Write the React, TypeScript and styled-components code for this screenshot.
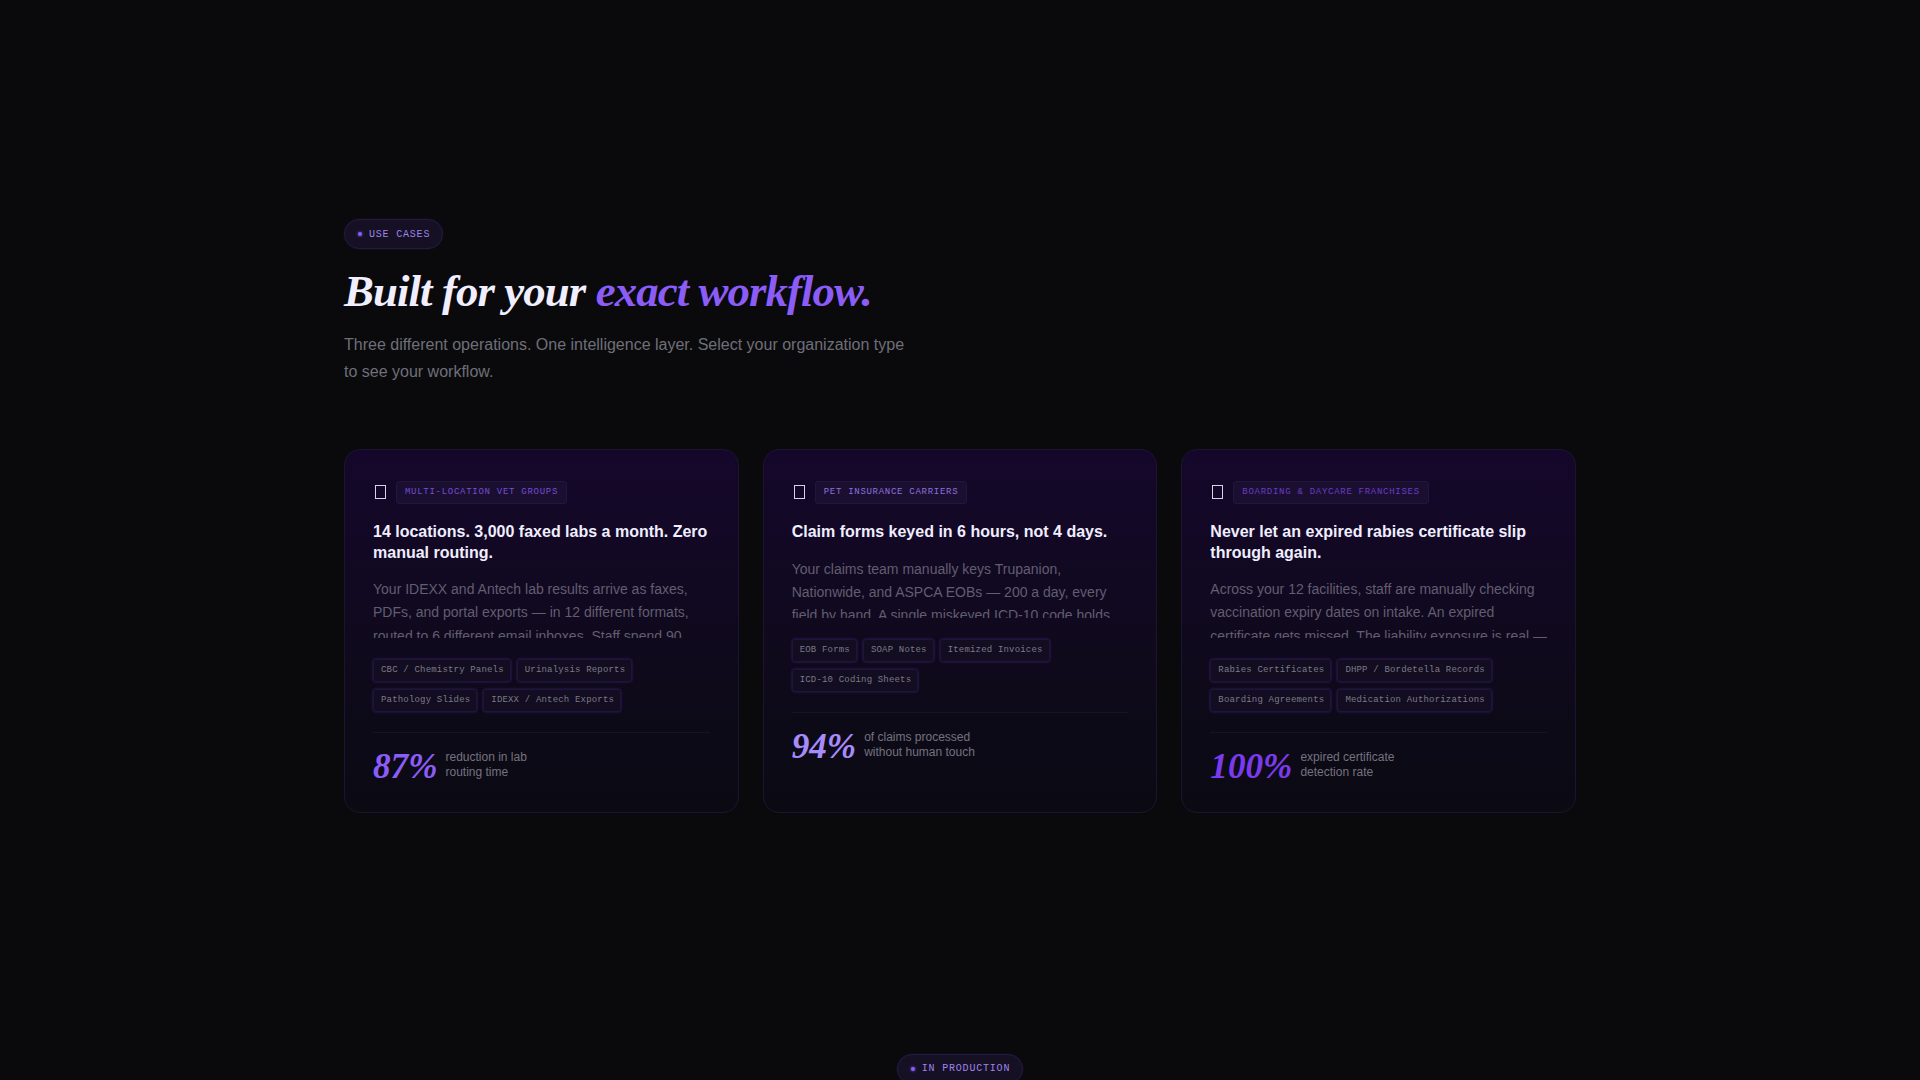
import React from "react";
import styled, { createGlobalStyle } from "styled-components";

const GlobalStyle = createGlobalStyle`
  * { margin:0; padding:0; box-sizing:border-box; }
  html, body, #root {
    width:100%;
    height:100%;
    background:#0a0a0d;
    font-family:"Liberation Sans", Arial, sans-serif;
    overflow:hidden;
  }
`;

const Page = styled.div`
  height: 1080px;
  overflow: hidden;
  display: flex;
  flex-direction: column;
  align-items: center;
`;

const UseCases = styled.section`
  width: 1232px;
  padding: 219px 0 120px;
`;

const Badge = styled.div`
  display: inline-flex;
  align-items: center;
  gap: 7px;
  height: 30px;
  padding: 0 12px;
  border: 1px solid #251b3f;
  border-radius: 100px;
  background: #151024;
  box-shadow: 0 0 0 1px rgba(124, 58, 237, 0.05);
  color: #a084ea;
  font-family: "Liberation Mono", monospace;
  font-size: 10px;
  letter-spacing: 0.08em;
  text-transform: uppercase;
`;

const Dot = styled.span`
  width: 4px;
  height: 4px;
  margin-left: 1px;
  border-radius: 50%;
  background: #8b5cf6;
  box-shadow: 0 0 3px #8b5cf6;
`;

const Heading = styled.h2`
  margin-top: 16px;
  font-family: "Liberation Serif", "Times New Roman", serif;
  font-size: 44.8px;
  font-style: italic;
  font-weight: 700;
  line-height: 1.2;
  letter-spacing: -0.02em;
  color: #f0eeff;

  em {
    color: #8b5cf6;
  }
`;

const Lead = styled.p`
  margin-top: 12px;
  max-width: 565px;
  font-size: 16px;
  line-height: 27px;
  color: #6f6f78;
`;

const CardGrid = styled.div`
  margin-top: 64px;
  display: grid;
  grid-template-columns: repeat(3, 1fr);
  gap: 24px;
`;

const Card = styled.article`
  height: 364px;
  padding: 31px 28px 28px;
  border: 1px solid #1c1430;
  border-radius: 16px;
  background: linear-gradient(180deg, #15072b 0%, #0e0a1a 65%, #0b0a13 100%);
`;

const CardTop = styled.div`
  display: flex;
  align-items: center;
  gap: 10px;
`;

// the missing-glyph box the source page shows in place of its emoji
const MissingGlyph = styled.span`
  width: 11px;
  height: 14px;
  margin-left: 2px;
  border: 1px solid #d8d4e8;
`;

const Category = styled.span<{ $color: string }>`
  padding: 5px 8px;
  border: 1px solid #21163c;
  border-radius: 3px;
  background: #1a0f30;
  color: ${({ $color }) => $color};
  font-family: "Liberation Mono", monospace;
  font-size: 9px;
  line-height: 11px;
  letter-spacing: 0.08em;
  text-transform: uppercase;
`;

const Title = styled.h3`
  margin-top: 18px;
  font-size: 16px;
  font-weight: 700;
  line-height: 20.8px;
  color: #f0eeff;
`;

const Body = styled.p`
  margin-top: 15px;
  height: 60px;
  overflow: hidden;
  font-size: 14px;
  line-height: 23.1px;
  color: #625d70;
`;

const Tags = styled.div`
  margin-top: 21px;
  display: flex;
  flex-wrap: wrap;
  gap: 7px 6px;
`;

const Tag = styled.span`
  padding: 5px 6px 5px 7px;
  border: 1px solid #1e1539;
  border-radius: 3px;
  background: #120d20;
  box-shadow: 0 0 0 1px rgba(76, 45, 160, 0.14), 0 0 4px rgba(76, 45, 160, 0.22);
  color: #7d7a88;
  font-family: "Liberation Mono", monospace;
  font-size: 9px;
  line-height: 11px;
  letter-spacing: 0.02em;
`;

const Outcome = styled.div`
  margin-top: 20px;
  padding-top: 16px;
  border-top: 1px solid #17131f;
  display: flex;
  align-items: center;
  gap: 8px;
`;

const Stat = styled.span<{ $color: string }>`
  font-family: "Liberation Serif", "Times New Roman", serif;
  font-size: 35.2px;
  font-style: italic;
  font-weight: 700;
  line-height: 1;
  color: ${({ $color }) => $color};
`;

const StatLabel = styled.span`
  max-width: 118px;
  margin-bottom: 3px;
  font-size: 12px;
  line-height: 15px;
  color: #75727f;
`;

const NextSection = styled.section`
  padding-top: 121px;
`;

const cases = [
  {
    category: "Multi-location vet groups",
    categoryColor: "#764dd4",
    title: "14 locations. 3,000 faxed labs a month. Zero manual routing.",
    body: "Your IDEXX and Antech lab results arrive as faxes, PDFs, and portal exports — in 12 different formats, routed to 6 different email inboxes. Staff spend 90",
    tags: ["CBC / Chemistry Panels", "Urinalysis Reports", "Pathology Slides", "IDEXX / Antech Exports"],
    stat: "87%",
    statColor: "#8b5cf6",
    label: "reduction in lab routing time",
  },
  {
    category: "Pet insurance carriers",
    categoryColor: "#8f70de",
    title: "Claim forms keyed in 6 hours, not 4 days.",
    body: "Your claims team manually keys Trupanion, Nationwide, and ASPCA EOBs — 200 a day, every field by hand. A single miskeyed ICD-10 code holds",
    tags: ["EOB Forms", "SOAP Notes", "Itemized Invoices", "ICD-10 Coding Sheets"],
    stat: "94%",
    statColor: "#a78bfa",
    label: "of claims processed without human touch",
  },
  {
    category: "Boarding & daycare franchises",
    categoryColor: "#6a3bc6",
    title: "Never let an expired rabies certificate slip through again.",
    body: "Across your 12 facilities, staff are manually checking vaccination expiry dates on intake. An expired certificate gets missed. The liability exposure is real —",
    tags: ["Rabies Certificates", "DHPP / Bordetella Records", "Boarding Agreements", "Medication Authorizations"],
    stat: "100%",
    statColor: "#7c3aed",
    label: "expired certificate detection rate",
  },
];

const App = () => {
  return (
    <>
      <GlobalStyle />
      <Page>
        <UseCases>
          <Badge>
            <Dot />
            Use cases
          </Badge>
          <Heading>
            Built for your <em>exact workflow.</em>
          </Heading>
          <Lead>
            Three different operations. One intelligence layer. Select your
            organization type to see your workflow.
          </Lead>

          <CardGrid>
            {cases.map((c) => (
              <Card key={c.category}>
                <CardTop>
                  <MissingGlyph />
                  <Category $color={c.categoryColor}>{c.category}</Category>
                </CardTop>
                <Title>{c.title}</Title>
                <Body>{c.body}</Body>
                <Tags>
                  {c.tags.map((t) => (
                    <Tag key={t}>{t}</Tag>
                  ))}
                </Tags>
                <Outcome>
                  <Stat $color={c.statColor}>{c.stat}</Stat>
                  <StatLabel>{c.label}</StatLabel>
                </Outcome>
              </Card>
            ))}
          </CardGrid>
        </UseCases>

        <NextSection>
          <Badge>
            <Dot />
            In production
          </Badge>
        </NextSection>
      </Page>
    </>
  );
};

export default App;
